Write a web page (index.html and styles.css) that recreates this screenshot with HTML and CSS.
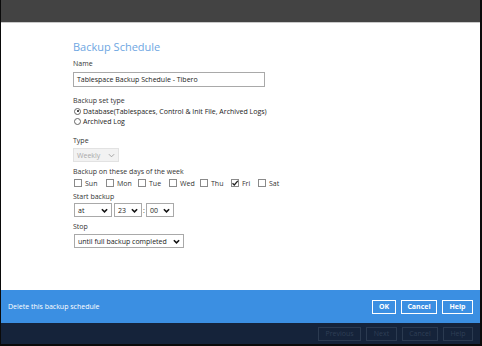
FILE: index.html
```html
<!DOCTYPE html>
<html>
<head>
<meta charset="utf-8">
<link rel="stylesheet" href="styles.css">
</head>
<body>
<div class="frame">
  <div class="topbar"></div>
  <div class="content">
    <h1 class="title">Backup Schedule</h1>
    <div class="label lbl-name">Name</div>
    <div class="input">Tablespace Backup Schedule - Tibero</div>
    <div class="label lbl-set">Backup set type</div>
    <div class="radio-row"><span class="radio checked"></span><span>Database(Tablespaces, Control &amp; Init File, Archived Logs)</span></div>
    <div class="radio-row"><span class="radio"></span><span>Archived Log</span></div>
    <div class="label lbl-type">Type</div>
    <div class="select disabled weekly"><span>Weekly</span>
      <svg class="chev thin" viewBox="0 0 8 5" width="7" height="5"><path d="M1 1 L4 4 L7 1" fill="none" stroke="#9a9a9a" stroke-width="1"/></svg>
    </div>
    <div class="label lbl-days">Backup on these days of the week</div>
    <div class="days">
      <label class="day"><span class="box"></span>Sun</label>
      <label class="day"><span class="box"></span>Mon</label>
      <label class="day"><span class="box"></span>Tue</label>
      <label class="day"><span class="box"></span>Wed</label>
      <label class="day"><span class="box"></span>Thu</label>
      <label class="day"><span class="box"><svg viewBox="0 0 8 8" width="8" height="8"><path d="M1.5 4.2 L3.3 6 L6.8 1.8" fill="none" stroke="#222" stroke-width="1.3"/></svg></span>Fri</label>
      <label class="day"><span class="box"></span>Sat</label>
    </div>
    <div class="label lbl-start">Start backup</div>
    <div class="time-row">
      <div class="select sel-at"><span>at</span>
        <svg class="chev" viewBox="0 0 8 5" width="7" height="5"><path d="M1 1 L4 4 L7 1" fill="none" stroke="#111" stroke-width="1.8"/></svg>
      </div>
      <div class="select sel-hr"><span>23</span>
        <svg class="chev" viewBox="0 0 8 5" width="7" height="5"><path d="M1 1 L4 4 L7 1" fill="none" stroke="#111" stroke-width="1.8"/></svg>
      </div>
      <span class="colon">:</span>
      <div class="select sel-min"><span>00</span>
        <svg class="chev" viewBox="0 0 8 5" width="7" height="5"><path d="M1 1 L4 4 L7 1" fill="none" stroke="#111" stroke-width="1.8"/></svg>
      </div>
    </div>
    <div class="label lbl-stop">Stop</div>
    <div class="select sel-stop"><span>until full backup completed</span>
      <svg class="chev" viewBox="0 0 8 5" width="7" height="5"><path d="M1 1 L4 4 L7 1" fill="none" stroke="#111" stroke-width="1.8"/></svg>
    </div>
  </div>
  <div class="bluebar">
    <span class="delete">Delete this backup schedule</span>
    <div class="btns">
      <span class="btn b-ok">OK</span>
      <span class="btn b-cancel">Cancel</span>
      <span class="btn b-help">Help</span>
    </div>
  </div>
  <div class="navbar">
    <span class="nbtn n-prev">Previous</span>
    <span class="nbtn n-next">Next</span>
    <span class="nbtn n-cancel">Cancel</span>
    <span class="nbtn n-help">Help</span>
  </div>
</div>
</body>
</html>
```

FILE: styles.css
```css
* { box-sizing: border-box; }
html, body { margin: 0; padding: 0; background: #000; }
body { font-family: "Open Sans", "Liberation Sans", sans-serif; color: #333; white-space: nowrap; }

.frame {
  width: 482px;
  height: 346px;
  border-left: 1px solid #0a0a0a;
  border-right: 2px solid #0a0a0a;
  border-bottom: 2px solid #0a0a0a;
  display: flex;
  flex-direction: column;
  background: #fff;
}

.topbar {
  height: 23px;
  background: #434343;
  border-bottom: 1px solid #c9c9c9;
  flex: none;
}

.content {
  flex: 1;
  min-height: 0;
  overflow: hidden;
  background: #fff;
  padding: 16px 0 0 72px;
  display: flex;
  flex-direction: column;
  align-items: flex-start;
}

.title {
  margin: 0;
  font-size: 11px;
  line-height: 16px;
  font-weight: 400;
  color: #6ea6e2;
}

.label {
  font-size: 7px;
  line-height: 10px;
  color: #333;
}
.lbl-name { margin-top: 4px; }
.lbl-set { margin-top: 9px; }
.lbl-type { margin-top: 10px; }
.lbl-days { margin-top: 5px; }
.lbl-start { margin-top: 4px; }
.lbl-stop { margin-top: 5px; }

.input {
  margin-top: 3px;
  width: 192px;
  height: 15px;
  border: 1px solid #a9a9a9;
  font-size: 7px;
  line-height: 13px;
  padding-left: 3px;
  color: #222;
}

.radio-row {
  display: flex;
  align-items: center;
  height: 10px;
  font-size: 7px;
  color: #222;
}
.radio {
  width: 7px;
  height: 7px;
  border: 1px solid #666;
  border-radius: 50%;
  margin-right: 2px;
  margin-left: 1px;
  position: relative;
  display: inline-block;
  flex: none;
}
.radio.checked::after {
  content: "";
  position: absolute;
  left: 1.5px;
  top: 1.5px;
  width: 2px;
  height: 2px;
  border-radius: 50%;
  background: #111;
}

.select {
  display: flex;
  align-items: center;
  justify-content: space-between;
  height: 14px;
  border: 1px solid #a9a9a9;
  font-size: 7px;
  padding: 0 3px 0 3px;
  color: #222;
  background: #fff;
}
.select.disabled {
  background: #f2f2f2;
  border-color: #e2e2e2;
  color: #a8a8a8;
}
.weekly { margin-top: 2px; width: 46px; }
.chev { flex: none; }

.days {
  margin-top: 1px;
  display: grid;
  grid-template-columns: 32px 32px 31px 31px 31px 27px auto;
  height: 10px;
  align-items: center;
}
.day {
  display: flex;
  align-items: center;
  font-size: 7px;
  color: #333;
}
.box {
  width: 8px;
  height: 8px;
  border: 1px solid #8a8a8a;
  margin: 0 3px 0 1px;
  display: inline-flex;
  flex: none;
  background: #fff;
}
.box svg { margin: -1px; }

.time-row {
  margin-top: 1px;
  display: flex;
  align-items: center;
}
.sel-at { width: 38px; margin-left: 1px; }
.sel-hr { width: 28px; margin-left: 2px; }
.colon { font-size: 7px; width: 4px; text-align: center; }
.sel-min { width: 28px; }
.sel-stop { margin-top: 2px; width: 110px; margin-left: 1px; }

.bluebar {
  flex: none;
  height: 33px;
  background: #3b8fe2;
  display: flex;
  align-items: center;
  justify-content: space-between;
  padding: 0 7px 0 7px;
}
.delete {
  font-size: 7px;
  color: #fff;
}
.btns {
  display: flex;
  gap: 5px;
}
.btn {
  height: 14px;
  border: 1px solid #fff;
  color: #fff;
  font-size: 7px;
  font-weight: 700;
  display: flex;
  align-items: center;
  justify-content: center;
}
.b-ok { width: 24px; }
.b-cancel { width: 36px; }
.b-help { width: 31px; }

.navbar {
  flex: none;
  height: 21px;
  background: #15233a;
  display: flex;
  align-items: center;
  justify-content: flex-end;
  gap: 5px;
  padding-right: 7px;
}
.nbtn {
  height: 14px;
  border: 1px solid #2b3a50;
  color: #2f3f56;
  font-size: 7px;
  display: flex;
  align-items: center;
  justify-content: center;
}
.n-prev { width: 43px; }
.n-next { width: 31px; }
.n-cancel { width: 36px; }
.n-help { width: 30px; }
```
